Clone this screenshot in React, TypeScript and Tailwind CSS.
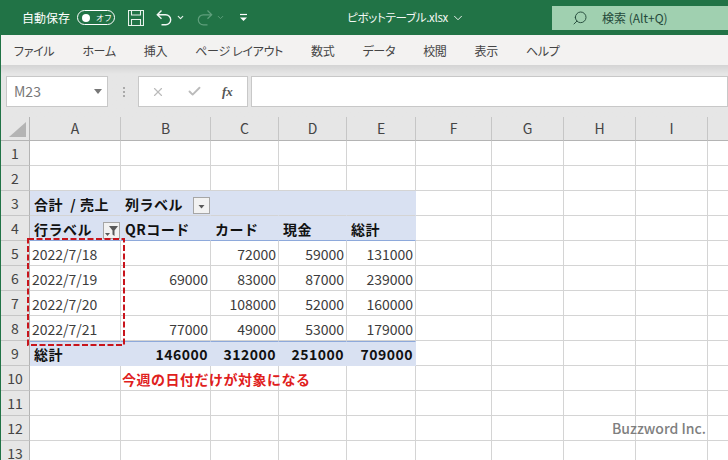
import React from "react";
import { Check, ChevronDown, Search, X } from "lucide-react";

const columns = ["A", "B", "C", "D", "E", "F", "G", "H", "I", ""];
const tabs = ["ファイル", "ホーム", "挿入", "ページ レイアウト", "数式", "データ", "校閲", "表示", "ヘルプ"];

type Row = { cells: string[]; kind?: "head" | "total" };

const rows: Row[] = [
  { cells: [] },
  { cells: [] },
  { cells: ["合計  / 売上", "列ラベル"], kind: "head" },
  { cells: ["行ラベル", "QRコード", "カード", "現金", "総計"], kind: "head" },
  { cells: ["2022/7/18", "", "72000", "59000", "131000"] },
  { cells: ["2022/7/19", "69000", "83000", "87000", "239000"] },
  { cells: ["2022/7/20", "", "108000", "52000", "160000"] },
  { cells: ["2022/7/21", "77000", "49000", "53000", "179000"] },
  { cells: ["総計", "146000", "312000", "251000", "709000"], kind: "total" },
  { cells: [] },
  { cells: [] },
  { cells: [] },
  { cells: [] },
];

function FilterButton({ filtered }: { filtered?: boolean }) {
  return (
    <span
      className={`absolute flex h-[17px] w-[17px] items-end justify-center border border-[#a6a6a6] bg-[#f2f2f2] ${
        filtered ? "right-[0px] bottom-[1px]" : "left-[72px] bottom-[1px]"
      }`}
    >
      <svg width="15" height="15" viewBox="0 0 15 15">
        {filtered && <path d="M5 3h9L10.5 7.5V13L8.5 11.5V7.5z" fill="#595959" />}
        <path d={filtered ? "M1 10h5l-2.5 3z" : "M4.5 7h6l-3 3.5z"} fill="#595959" />
      </svg>
    </span>
  );
}

function Cell({ row, col, text }: { row: Row; col: number; text: string }) {
  const pivot = !!row.kind && col < 5;
  const isNumber = /^\d+$/.test(text);
  const rowIndex = rows.indexOf(row);
  return (
    <div
      className={`relative flex h-[25px] items-center whitespace-pre border-r px-[2px] pt-[2px] text-[14px] ${
        isNumber ? "justify-end" : "justify-start"
      } ${
        pivot
          ? "border-r-[#d9e1f2] bg-[#d9e1f2] font-bold text-[#111]"
          : "border-r-[#d4d4d4] bg-white text-[#3c3c3c]"
      } ${
        rowIndex === 3 && col < 5
          ? "border-b border-b-[#8ea9db]"
          : rowIndex === 8 && col < 5
            ? "border-t border-b border-t-[#8ea9db] border-b-[#d9e1f2]"
            : "border-b border-b-[#d4d4d4]"
      } ${pivot ? "tracking-[0.5px]" : ""} ${pivot && !isNumber ? "pl-[4px]" : ""}`}
    >
      {text}
      {rowIndex === 2 && col === 1 && <FilterButton />}
      {rowIndex === 3 && col === 0 && <FilterButton filtered />}
      {rowIndex === 9 && col === 1 && (
        <span className="absolute left-[1px] top-[3px] z-10 text-[14px] font-bold tracking-[0.5px] text-[#e0201c]">
          今週の日付だけが対象になる
        </span>
      )}
    </div>
  );
}

function TitleBar() {
  return (
    <div className="flex h-[35px] items-center bg-[#217346] pl-[22px] text-white">
      <span className="w-[48px] whitespace-nowrap text-[12px]">自動保存</span>
      <span className="ml-[7px] flex h-[15px] w-[38px] items-center rounded-full border border-white pl-[4px]">
        <span className="h-[8px] w-[8px] rounded-full bg-white" />
        <span className="ml-[6px] whitespace-nowrap text-[8px] leading-none">オフ</span>
      </span>
      <svg className="ml-[13px]" width="16" height="18" viewBox="0 0 16 18" fill="none" stroke="#e8f2ec" strokeWidth="1.1">
        <path d="M0.5 1.5h15v15h-15z" />
        <path d="M3.5 1.5v4.5h9v-4.5M3.5 16.5v-6h9v6" />
      </svg>
      <svg className="ml-[12px]" width="16" height="18" viewBox="0 0 16 18" fill="none" stroke="#f2f7f4" strokeWidth="1.4">
        <path d="M5.5 1.5L1.3 5.8L5.5 9.8M1.5 5.8h8.2a4.6 4.6 0 0 1 0 10H5.5" />
      </svg>
      <ChevronDown className="ml-[4px]" size={9} strokeWidth={3} color="#e8f2ec" />
      <svg className="ml-[12px]" width="16" height="18" viewBox="0 0 16 18" fill="none" stroke="#5f9f7c" strokeWidth="1.2">
        <path d="M10.5 1.5L14.7 5.8L10.5 9.8M14.5 5.8H6.3a4.6 4.6 0 0 0 0 10H10.5" />
      </svg>
      <ChevronDown className="ml-[3px]" size={9} strokeWidth={2.5} color="#5f9f7c" />
      <svg className="ml-[14px]" width="9" height="9" viewBox="0 0 9 9" fill="none">
        <path d="M1 1.5h7" stroke="#fff" strokeWidth="1.2" />
        <path d="M1 4.5h7L4.5 8z" fill="#fff" />
      </svg>
      <span className="ml-[99px] flex w-[119px] items-center whitespace-nowrap text-[11.5px] tracking-[-0.3px] text-[#f4f8f5] [font-feature-settings:'palt']">
        ピボットテーブル.xlsx
        <ChevronDown className="ml-[3px] shrink-0" size={14} strokeWidth={1.6} />
      </span>
      <div className="ml-[86px] flex h-[24px] flex-1 items-center bg-[#a0d0b0] pl-[20px] text-[12px] text-[#24493a]">
        <Search className="-scale-x-100" size={16} strokeWidth={1.4} />
        <span className="ml-[14px] whitespace-nowrap">検索 (Alt+Q)</span>
      </div>
    </div>
  );
}

function FormulaBar() {
  return (
    <div className="flex h-[52px] items-center bg-[#e6e6e6] bg-gradient-to-b from-[#d4d4d4] to-[#e6e6e6] to-[9px] pl-[5px] pt-[1px]">
      <div className="flex h-[31px] w-[102px] items-center justify-between border border-[#c8c8c8] bg-white pl-[7px] pr-[5px] text-[14px] text-[#777]">
        M23
        <svg width="8" height="5" viewBox="0 0 8 5">
          <path d="M0 0h8L4 5z" fill="#777" />
        </svg>
      </div>
      <span className="ml-[15px] flex w-[3px] flex-col gap-[2px]">
        <i className="h-[2px] w-[2px] bg-[#aaa]" />
        <i className="h-[2px] w-[2px] bg-[#aaa]" />
        <i className="h-[2px] w-[2px] bg-[#aaa]" />
      </span>
      <div className="ml-[12px] flex h-[31px] w-[110px] items-center border border-[#c8c8c8] bg-white pl-[12px] text-[#bbb]">
        <X size={14} strokeWidth={2} />
        <Check className="ml-[22px]" size={15} strokeWidth={3} />
        <span className="ml-[20px] text-[13px] font-bold italic text-[#555] [font-family:'Liberation_Serif',serif]">fx</span>
      </div>
      <div className="ml-[3px] h-[31px] flex-1 border border-[#c8c8c8] bg-white" />
    </div>
  );
}

function Sheet() {
  return (
    <div className="relative h-[343px] overflow-hidden">
      <div className="grid grid-cols-[29px_91px_90px_68px_68px_69px_76px_72px_72px_72px_21px]">
        <div className="flex h-[24px] items-end justify-end border-r border-b border-[#b4b4b4] bg-[#e6e6e6] pr-[3px] pb-[3px]">
          <svg width="17" height="15" viewBox="0 0 17 15">
            <path d="M17 0v15H0z" fill="#b4b4b4" />
          </svg>
        </div>
        {columns.map((c, i) => (
          <div
            key={i}
            className="flex h-[24px] items-center justify-center border-r border-b border-r-[#c6c6c6] border-b-[#b4b4b4] bg-[#e6e6e6] text-[14px] text-[#444]"
          >
            {c}
          </div>
        ))}
        {rows.map((row, i) => (
          <React.Fragment key={i}>
            <div className="flex h-[25px] items-center justify-center border-r border-b border-r-[#b4b4b4] border-b-[#c6c6c6] bg-[#e6e6e6] text-[14px] text-[#444]">
              {i + 1}
            </div>
            {columns.map((_, col) => (
              <Cell key={col} row={row} col={col} text={row.cells[col] ?? ""} />
            ))}
          </React.Fragment>
        ))}
      </div>
      {/* annotation drawn over the sheet */}
      <svg className="absolute left-[26px] top-[121px]" width="98" height="108" viewBox="0 0 98 108" fill="none">
        <rect x="1" y="1" width="96" height="106" stroke="#c8141c" strokeWidth="2" strokeDasharray="6 2.5" />
      </svg>
      <span className="absolute left-[611px] top-[301px] text-[14px] font-medium text-[#7f7f7f]">Buzzword Inc.</span>
    </div>
  );
}

export default function App() {
  return (
    <div className="h-[460px] w-[728px] overflow-hidden bg-white [font-family:'Noto_Sans_CJK_JP','Noto_Sans',sans-serif]">
      <TitleBar />
      <div className="border-l border-[#217346]">
        <div className="flex h-[30px] items-center gap-[28px] bg-[#f3f2f1] pl-[13px] pt-[1px] text-[12px] tracking-[-0.3px] text-[#444] [font-feature-settings:'palt']">
          {tabs.map((t) => (
            <span key={t} className="whitespace-nowrap">
              {t}
            </span>
          ))}
        </div>
        <FormulaBar />
        <Sheet />
      </div>
    </div>
  );
}
